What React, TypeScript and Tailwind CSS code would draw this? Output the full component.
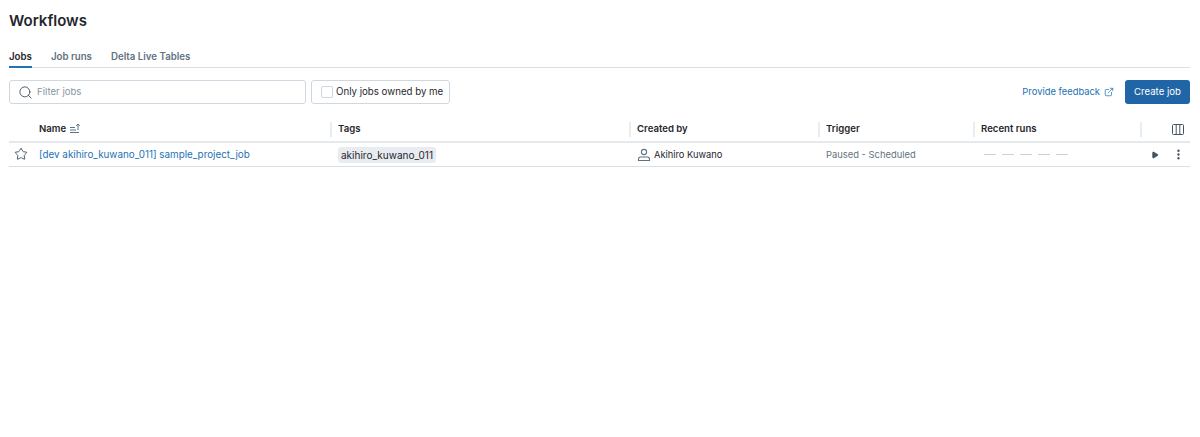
import { ExternalLink, MoreVertical, Play, Search, Star } from "lucide-react";

const headerCell = "flex h-[15px] items-center border-l-2 border-[#e9edf1] pl-[6px]";
const columns = "grid grid-cols-[321px_299px_189px_155px_167px_50px] items-center";

const App = () => {
  return (
    <div className="h-[437px] w-[1200px] overflow-hidden bg-white pl-[9px] pr-[10px] font-['Inter',sans-serif] text-[10px] text-[#1f272d]">
      <h1 className="pt-[11px] text-[15px] font-semibold leading-[19px]">Workflows</h1>

      <div className="mt-[18px] flex h-[20px] gap-[19px] border-b border-[#d8e0e7] pt-[2px] text-[9.7px] font-semibold">
        <div className="h-[18px] border-b-2 border-[#2272b4] leading-[14px]">Jobs</div>
        <div className="leading-[14px] text-[#5f7281]">Job runs</div>
        <div className="leading-[14px] text-[#5f7281]">Delta Live Tables</div>
      </div>

      <div className="mt-[12px] flex h-[24px] items-center">
        <div className="flex h-[24px] w-[297px] items-center gap-[4px] rounded-[3px] border border-[#cfd8e0] pl-[8px] text-[9.6px] text-[#8696a3]">
          <Search size={15} strokeWidth={1.5} className="text-[#445461]" />
          <span>Filter jobs</span>
        </div>
        <div className="ml-[5px] flex h-[24px] w-[139px] items-center gap-[3px] rounded-[3px] border border-[#cfd8e0] pl-[9px] text-[9.7px]">
          <span className="h-[12px] w-[12px] shrink-0 rounded-[2px] border border-[#cfd8e0]" />
          <span className="whitespace-nowrap">Only jobs owned by me</span>
        </div>
        <a className="ml-auto flex items-center gap-[4px] text-[9.4px] text-[#2272b4]">
          Provide feedback
          <ExternalLink size={10} strokeWidth={1.8} />
        </a>
        <button className="ml-[11px] h-[24px] w-[65px] rounded-[3px] bg-[#2065a5] text-[9.6px] text-white">Create job</button>
      </div>

      <div className={`mt-[15px] h-[24px] border-b-2 border-[#e4e9ee] pb-[2px] text-[9.6px] font-semibold ${columns}`}>
        <div className="flex items-center gap-[3px] pl-[30px]">
          Name
          <svg width="13" height="11" viewBox="0 0 13 11" fill="none" stroke="#5f7281" strokeWidth="1">
            <path d="M1 4.5h5M1 7h6M1 9.5h9M9 7V1M7.2 2.8 9 1l1.8 1.8" />
          </svg>
        </div>
        <div className={headerCell}>Tags</div>
        <div className={headerCell}>Created by</div>
        <div className={headerCell}>Trigger</div>
        <div className={headerCell}>Recent runs</div>
        <div className="flex h-[15px] items-center justify-between border-l-2 border-[#e9edf1] pr-[6px]">
          <span />
          <svg width="12" height="11" viewBox="0 0 12 11" fill="none" stroke="#445461" strokeWidth="1">
            <rect x="0.5" y="0.5" width="11" height="10" rx="1" />
            <path d="M4.2 .5v10M7.8 .5v10" />
          </svg>
        </div>
      </div>

      <div className={`h-[24px] border-b border-[#d8e0e7] ${columns}`}>
        <div className="flex items-center">
          <Star size={14} strokeWidth={1.6} className="ml-[5px] text-[#445461]" />
          <a className="ml-[11px] whitespace-nowrap text-[9.85px] text-[#2272b4]">[dev akihiro_kuwano_011] sample_project_job</a>
        </div>
        <div className="pl-[8px]">
          <span className="inline-block h-[16px] rounded-[3px] bg-[#e8ecf0] px-[3px] leading-[16px]">akihiro_kuwano_011</span>
        </div>
        <div className="flex items-center gap-[3px] pl-[8px]">
          <svg width="14" height="14" viewBox="0 0 14 14" fill="none" stroke="#5f7281" strokeWidth="1.1">
            <circle cx="7" cy="4" r="2.6" />
            <path d="M1.5 12.5v-1.4c0-1.2 1-2.1 2.2-2.1h6.6c1.2 0 2.2.9 2.2 2.1v1.4z" />
          </svg>
          <span className="text-[9.3px]">Akihiro Kuwano</span>
        </div>
        <div className="pl-[8px] pt-[2px] text-[9.4px] text-[#5f7281]">Paused - Scheduled</div>
        <div className="flex gap-[6px] pl-[11px]">
          <span className="h-px w-[12px] bg-[#c9d2da]" />
          <span className="h-px w-[12px] bg-[#c9d2da]" />
          <span className="h-px w-[12px] bg-[#c9d2da]" />
          <span className="h-px w-[12px] bg-[#c9d2da]" />
          <span className="h-px w-[12px] bg-[#c9d2da]" />
        </div>
        <div className="flex items-center justify-between pl-[11px] pr-[5px]">
          <Play size={8} className="fill-[#445461] text-[#445461]" />
          <MoreVertical size={13} strokeWidth={2.4} className="text-[#445461]" />
        </div>
      </div>
    </div>
  );
};

export default App;
